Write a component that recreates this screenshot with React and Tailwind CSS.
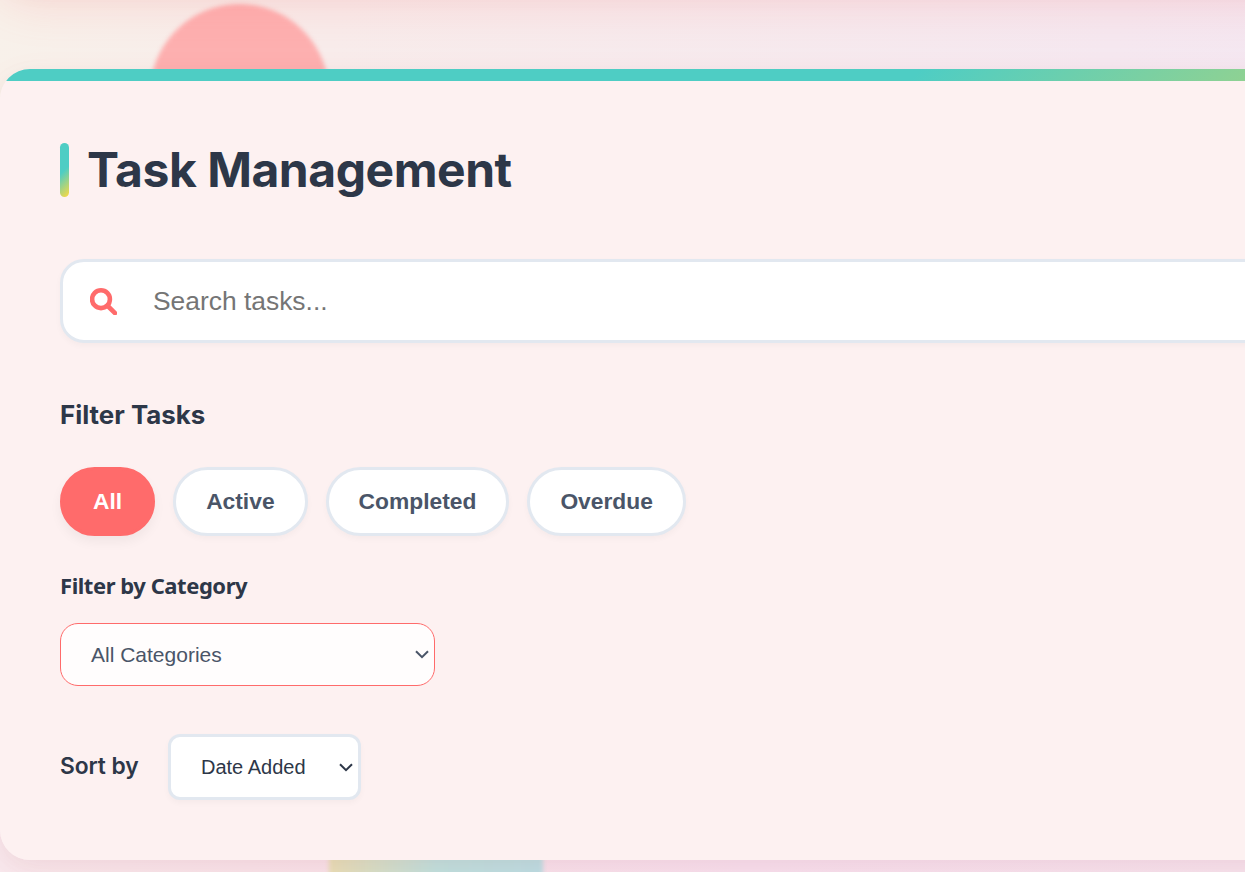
import React from "react";

const filters = ["All", "Active", "Completed", "Overdue"];

function Chevron({ className }) {
  return (
    <svg className={className} width="14" height="9" viewBox="0 0 14 9" fill="none" stroke="currentColor" strokeWidth="2">
      <path d="M1 1.2L7 7.2L13 1.2" />
    </svg>
  );
}

function SearchIcon({ className }) {
  return (
    <svg className={className} viewBox="0 0 27 27" fill="none" stroke="currentColor" strokeLinecap="round">
      <circle cx="11" cy="11.2" r="8.9" strokeWidth="4.6" />
      <path d="M17.8 18L25 25.1" strokeWidth="4.6" />
    </svg>
  );
}

function Backdrop() {
  return (
    <div className="absolute inset-0 overflow-hidden bg-[linear-gradient(100deg,#f8f1ea_0%,#f8eceb_24%,#f5e8f0_80%,#f4e7f2_100%)]">
      <div className="absolute inset-x-0 bottom-0 h-[436px] bg-[linear-gradient(90deg,#f8e9ee_0%,#f8e3eb_30%,#f7e1f0_60%,#f6e4ef_100%)]" />
      <div className="absolute left-[150px] top-[4px] size-[179px] rounded-full bg-[#fdb0b0] blur-[2px]" />
      <div className="absolute left-[329px] top-[700px] h-[214px] w-[214px] bg-[linear-gradient(90deg,#e8e0b8_0%,#bfe2e0_50%,#bbdfe5_100%)] blur-[2px]" />
      <div className="absolute left-0 -top-[200px] h-[188px] w-[1830px] rounded-[30px] shadow-[0_12px_48px_rgba(255,107,107,0.22),0_6px_24px_rgba(0,0,0,0.03)]" />
    </div>
  );
}

export default function App() {
  return (
    <div className="relative h-[872px] w-[1245px] overflow-hidden pt-[69px] font-[Inter,sans-serif] text-[#2d3748]">
      <Backdrop />
      <section className="relative h-[791px] w-[1830px] rounded-[30px] shadow-[0_12px_36px_rgba(255,107,107,0.08),0_6px_24px_rgba(0,0,0,0.04)]">
        <div className="flex h-full flex-col overflow-hidden rounded-[30px] bg-[#fdf1f1]">
          <div className="h-3 shrink-0 bg-[linear-gradient(135deg,#4ecdc4_50%,#ffd93d_100%)]" />
          <div className="flex flex-col px-[60px] pt-[62px]">
            <div className="flex h-[54px] items-center gap-[18px]">
              <div className="h-[54px] w-[9px] rounded-full bg-[linear-gradient(135deg,#4ecdc4_50%,#ffd93d_100%)]" />
              <h1 className="whitespace-nowrap text-[48px] font-bold leading-[54px] tracking-[-0.46px]">Task Management</h1>
            </div>

            <div className="mt-[62px] flex h-[84px] items-center rounded-[24px] border-3 border-[#e2e8f0] bg-white pl-[27px] shadow-[0_3px_6px_rgba(0,0,0,0.03)]">
              <SearchIcon className="size-[27px] text-[#ff6b6b]" />
              <input
                className="ml-[36px] w-[900px] bg-transparent pt-px font-['Liberation_Sans',sans-serif] text-[26.4px] outline-none placeholder:text-[#757575]"
                placeholder="Search tasks..."
              />
            </div>

            <h2 className="mt-[54px] h-9 text-[25.9px] font-bold leading-9">Filter Tasks</h2>
            <div className="mt-[34px] flex gap-[18px] font-['Liberation_Sans',sans-serif] text-[22.8px] font-bold">
              {filters.map((name, i) => (
                <button
                  key={name}
                  className={
                    i === 0
                      ? "h-[69px] rounded-full border-3 border-[#ff6b6b] bg-[#ff6b6b] px-[30px] pb-px text-white shadow-[0_6px_12px_rgba(0,0,0,0.05)]"
                      : "h-[69px] rounded-full border-3 border-[#e2e8f0] bg-white px-[30px] pb-px text-[#4a5568] shadow-[0_3px_6px_rgba(0,0,0,0.03)]"
                  }
                >
                  {name}
                </button>
              ))}
            </div>

            <h3 className="mt-[33px] h-8 font-['Noto_Sans',sans-serif] text-[22px] font-bold leading-8 tracking-[-0.45px]">Filter by Category</h3>
            <div className="mt-[22px] flex h-[63px] w-[375px] items-center justify-between rounded-[18px] border border-[#ff6b6b] bg-[#fffdfd] pl-[30px] pr-[5px] font-['Liberation_Sans',sans-serif] text-[21px] text-[#4a5568]">
              <span>All Categories</span>
              <Chevron />
            </div>

            <div className="mt-[48px] flex h-[66px] items-center">
              <span className="w-[108px] whitespace-nowrap pb-[2px] text-[22.8px] font-semibold tracking-[-0.1px]">Sort by</span>
              <div className="flex h-[66px] w-[193px] items-center justify-between rounded-[12px] border-3 border-[#e2e8f0] bg-white pl-[30px] pr-[5px] font-['Liberation_Sans',sans-serif] text-[20px] shadow-[0_3px_6px_rgba(0,0,0,0.03)]">
                <span>Date Added</span>
                <Chevron />
              </div>
            </div>
          </div>
        </div>
      </section>
    </div>
  );
}
